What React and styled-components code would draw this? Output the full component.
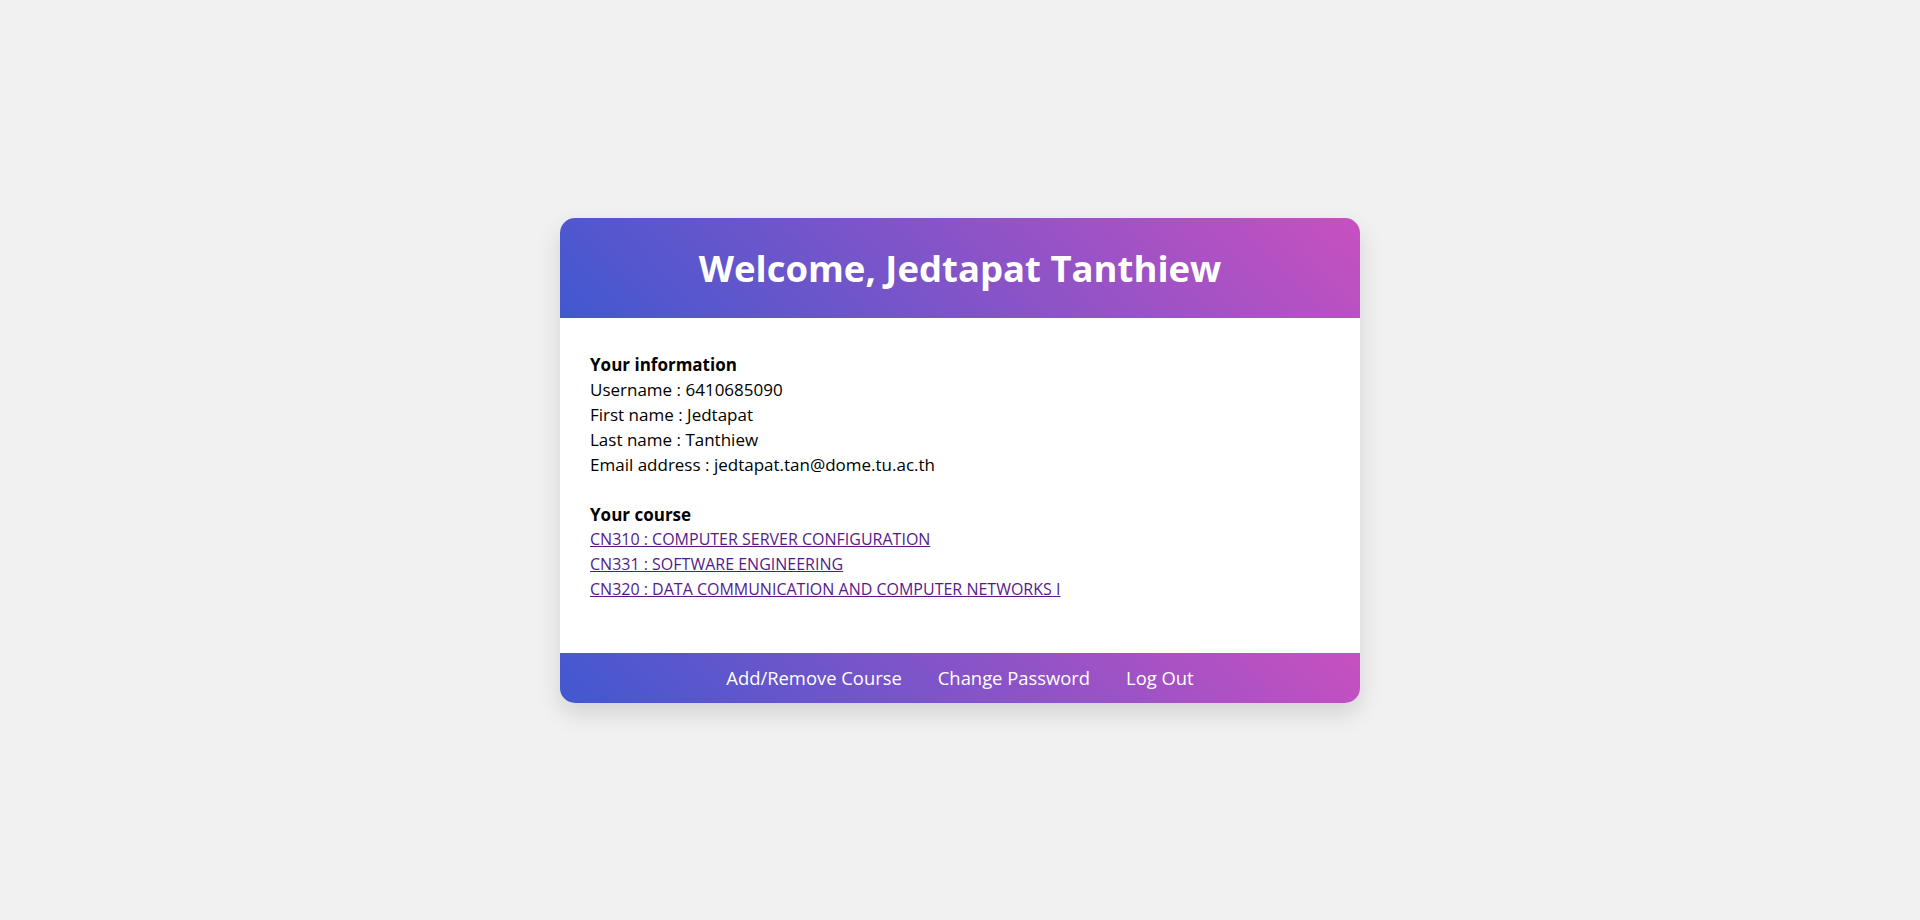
import React from "react";
import styled, { createGlobalStyle } from "styled-components";

const GlobalStyle = createGlobalStyle`
  * { box-sizing: border-box; }
  html, body { margin: 0; padding: 0; }
  body {
    background: #f1f1f1;
    font-family: "Open Sans", "Liberation Sans", sans-serif;
    color: #000;
  }
`;

const Page = styled.main`
  min-height: 100vh;
  display: flex;
  align-items: center;
  justify-content: center;
`;

const Card = styled.section`
  width: 800px;
  background: #fff;
  border-radius: 15px;
  overflow: hidden;
  box-shadow: 0 10px 25px rgba(0, 0, 0, 0.13);
  display: flex;
  flex-direction: column;
`;

const Header = styled.header`
  height: 100px;
  display: flex;
  align-items: center;
  justify-content: center;
  background: linear-gradient(45deg, #4158d0 0%, #c850c0 100%);
`;

const Title = styled.h1`
  margin: 0;
  color: #fff;
  font-size: 36.5px;
  font-weight: 700;
  letter-spacing: 0;
`;

const Body = styled.div`
  padding: 34px 30px 51px;
  font-size: 17px;
  line-height: 25px;
`;

const Section = styled.div`
  display: flex;
  flex-direction: column;
  & + & {
    margin-top: 25px;
  }
`;

const Heading = styled.strong`
  font-weight: 700;
`;

const Line = styled.span``;

const CourseLink = styled.a`
  color: #551a8b;
  font-size: 16px;
  text-decoration: underline;
  align-self: flex-start;
`;

const Footer = styled.nav`
  height: 50px;
  display: flex;
  align-items: center;
  justify-content: center;
  background: linear-gradient(45deg, #4158d0 0%, #c850c0 100%);
`;

const FooterLink = styled.a`
  color: #fff;
  text-decoration: none;
  font-size: 18.4px;
  padding: 0 18px;
`;

const info = [
  ["Username", "6410685090"],
  ["First name", "Jedtapat"],
  ["Last name", "Tanthiew"],
  ["Email address", "jedtapat.tan@dome.tu.ac.th"],
];

const courses = [
  "CN310 : COMPUTER SERVER CONFIGURATION",
  "CN331 : SOFTWARE ENGINEERING",
  "CN320 : DATA COMMUNICATION AND COMPUTER NETWORKS I",
];

export default function App() {
  return (
    <>
      <GlobalStyle />
      <Page>
        <Card>
          <Header>
            <Title>Welcome, Jedtapat Tanthiew</Title>
          </Header>
          <Body>
            <Section>
              <Heading>Your information</Heading>
              {info.map(([k, v]) => (
                <Line key={k}>
                  {k} : {v}
                </Line>
              ))}
            </Section>
            <Section>
              <Heading>Your course</Heading>
              {courses.map((c) => (
                <CourseLink key={c} href="#">
                  {c}
                </CourseLink>
              ))}
            </Section>
          </Body>
          <Footer>
            <FooterLink href="#">Add/Remove Course</FooterLink>
            <FooterLink href="#">Change Password</FooterLink>
            <FooterLink href="#">Log Out</FooterLink>
          </Footer>
        </Card>
      </Page>
    </>
  );
}
